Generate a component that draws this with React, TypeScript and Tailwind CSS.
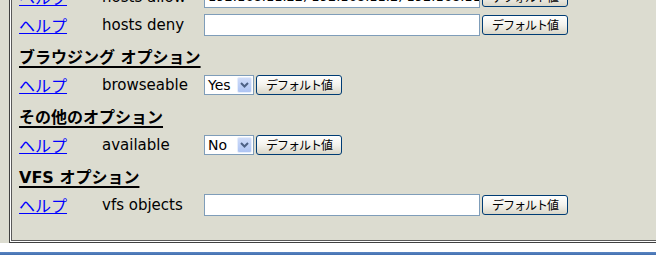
const LAT = "font-['DejaVu_Sans','Noto_Sans_CJK_JP',sans-serif]";
const JP = "font-['Noto_Sans_CJK_JP',sans-serif]";

function DefaultBtn() {
  return (
    <button
      className={`flex h-[20px] w-[86px] shrink-0 items-center justify-center rounded-[3px] border border-[#003c74] bg-gradient-to-b from-white via-[#f3f2ec] to-[#d9d6c8] ${JP} text-[12px] leading-none tracking-[-1px] text-black`}
    >
      デフォルト値
    </button>
  );
}

function TextBox({ value = "" }: { value?: string }) {
  return (
    <div
      className={`flex h-[22px] w-[276px] items-center overflow-hidden whitespace-nowrap border border-[#7f9db9] bg-white pl-[3px] ${LAT} text-[13px] text-black`}
    >
      {value}
    </div>
  );
}

function Select({ value }: { value: string }) {
  return (
    <div className="flex h-[20px] w-[50px] shrink-0 items-center border border-[#7f9db9] bg-white">
      <span className={`flex-1 pl-[3px] ${LAT} text-[14px] leading-none text-black`}>{value}</span>
      <span className="mr-px flex h-[16px] w-[15px] items-center justify-center rounded-[2px] border border-[#e6eefc] bg-gradient-to-b from-[#cfdcf9] to-[#aec4f3]">
        <svg width="9" height="6" viewBox="0 0 9 6">
          <path d="M1 1 L4.5 4.5 L8 1" fill="none" stroke="#4d6185" strokeWidth="2" />
        </svg>
      </span>
    </div>
  );
}

function Row({ label, first, children }: { label: string; first?: boolean; children: React.ReactNode }) {
  return (
    <div className={`flex h-[30px] items-center ${first ? "pt-[4px]" : ""}`}>
      <a className={`w-[83px] ${JP} text-[16px] leading-none text-[#0000ff] underline`}>ヘルプ</a>
      <span className={`w-[102px] ${LAT} text-[15px] leading-none text-black`}>{label}</span>
      <div className="flex items-center gap-[2px]">{children}</div>
    </div>
  );
}

function Heading({ children }: { children: React.ReactNode }) {
  return (
    <div className="flex h-[30px] items-center pt-[5px]">
      <span className={`${LAT} text-[16px] font-bold leading-none text-black underline decoration-2 underline-offset-[3px]`}>
        {children}
      </span>
    </div>
  );
}

export default function App() {
  return (
    <div className="h-[255px] w-[656px] overflow-hidden bg-white">
      <div className="h-[243px] overflow-hidden bg-[#dcdcd0] pl-[9px]">
        <div className="-mt-[24px] w-[700px] border border-[#404040] bg-white p-px">
          <div className="border border-[#5a5a5a] bg-[#dcdcd0] pb-[20px] pl-[7px] pt-px">
            <Row label="hosts allow" first>
              <TextBox value="192.168.11.22, 192.168.11.2, 192.168.11.3, 12" />
              <DefaultBtn />
            </Row>
            <Row label="hosts deny">
              <TextBox />
              <DefaultBtn />
            </Row>
            <Heading>ブラウジング オプション</Heading>
            <Row label="browseable">
              <Select value="Yes" />
              <DefaultBtn />
            </Row>
            <Heading>その他のオプション</Heading>
            <Row label="available">
              <Select value="No" />
              <DefaultBtn />
            </Row>
            <Heading>VFS オプション</Heading>
            <Row label="vfs objects">
              <TextBox />
              <DefaultBtn />
            </Row>
          </div>
        </div>
      </div>
      <div className="mt-[9px] h-[4px] bg-gradient-to-b from-[#5a86c4] to-[#3c68a8]" />
    </div>
  );
}
